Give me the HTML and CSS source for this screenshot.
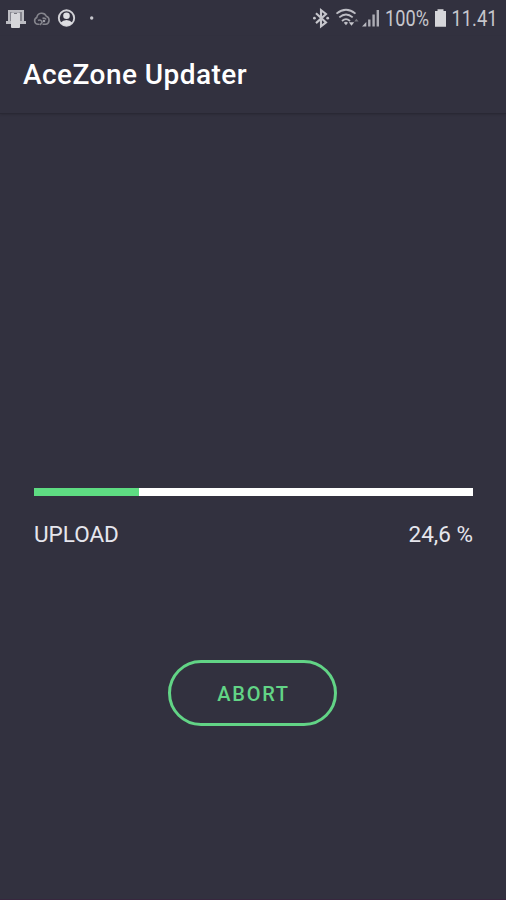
FILE: index.html
```html
<!DOCTYPE html>
<html lang="en">
  <head>
    <meta charset="UTF-8" />
    <meta name="viewport" content="width=device-width, initial-scale=1.0" />
    <title>AceZone Updater</title>
    <link rel="stylesheet" href="styles.css">
  </head>
  <body>
    <div class="status-bar">
      <svg class="status-left" width="100" height="36" viewBox="0 0 100 36">
        <!-- Device -->
        <path d="M8 10H24V21H26V24H6V21H8Z" fill="#bcbcc2" />
        <path d="M10 12H22V21H10Z" fill="#85858e" />
        <rect x="11" y="12.5" width="9" height="15.5" rx="1" fill="#d6d6da" />
        <path d="M14 13.5H17" stroke="#77777f" />
        <!-- Cloud -->
        <g fill="none" stroke="#85858d" stroke-width="1.6">
          <path d="M39.5 24.3H38A3.6 3.6 0 0 1 36.8 17.4A5 5 0 0 1 46.3 16.2A4.2 4.2 0 0 1 45.5 24.3H42.5" />
          <path d="M38 20.5A2.5 2.5 0 0 1 42 22.5L40 25M46 19.5A2.5 2.5 0 0 0 42.5 18.5" />
        </g>
        <circle cx="44" cy="21" r="1.3" fill="#9c9ca4" />
        <!-- Account -->
        <circle cx="66.5" cy="18" r="7.7" fill="none" stroke="#d2d2d7" stroke-width="1.9" />
        <circle cx="66.5" cy="15.7" r="3.3" fill="#dedee2" />
        <path d="M60.6 22.8Q63 20 66.5 20T72.4 22.8Q70 25.7 66.5 25.7T60.6 22.8Z" fill="#dedee2" />
        <circle cx="91.7" cy="18" r="1.7" fill="#c6c6cc" />
      </svg>

      <svg class="status-right" width="206" height="36" viewBox="300 0 206 36">
        <!-- Bluetooth -->
        <path d="M316 13.3L326 22.4L321 26.3V10.2L326 14L316 23.1" fill="none" stroke="#c6c6cc" stroke-width="2.1" />
        <circle cx="314.4" cy="18.2" r="1.4" fill="#c6c6cc" />
        <circle cx="327.7" cy="18.2" r="1.4" fill="#c6c6cc" />
        <!-- Wi-Fi -->
        <g fill="none" stroke="#bdbdc4" stroke-width="1.8">
          <path d="M336.5 13.6Q346 5.8 355.5 13.6" />
          <path d="M339.3 17.4Q346 11.6 352.7 17.4" />
          <path d="M342 21Q346 17.2 350 21" />
        </g>
        <path d="M343.8 22.8Q346 20.8 348 22.8L346 25.3Z" fill="#bdbdc4" />
        <path d="M348.8 22.3H354.2L351.5 25.8Z" fill="#c6c6cc" />
        <path d="M354.2 21.5L356.4 18.7L358.6 21.5Z" fill="#75757e" />
        <!-- Signal -->
        <path d="M362 26.5L366.3 22V26.5Z" fill="#b9b9c0" />
        <path d="M369.3 26.5V19.5M373.6 26.5V14.5M377.8 26.5V10" stroke="#adadb5" stroke-width="2.4" />
        <text x="385" y="26.2" textLength="44" lengthAdjust="spacingAndGlyphs">100%</text>
        <!-- Battery -->
        <path d="M437.5 9.3H443.5V11H446V26.7H435V11H437.5Z" fill="#d6d6da" />
        <text x="451.5" y="26.2" textLength="46" lengthAdjust="spacingAndGlyphs">11.41</text>
      </svg>
    </div>

    <div class="navbar">
      <h1>AceZone Updater</h1>
    </div>

    <div class="container">
      <div class="progress">
        <div class="progress-fill" style="width: 24%"></div>
      </div>
      <div class="progress-info">
        <span>UPLOAD</span>
        <span>24,6 %</span>
      </div>
      <button class="abort-button" type="button">ABORT</button>
    </div>
  </body>
</html>
```

FILE: styles.css
```css
* {
  box-sizing: border-box;
}

body {
  font-family: "Roboto", sans-serif;
  margin: 0;
  height: 900px;
  background-color: #32313f;
  color: white;
  border-bottom: 1px solid #38263e;
  overflow: hidden;
}

.status-bar {
  display: flex;
  justify-content: space-between;
  height: 36px;
}

.status-bar text {
  font-size: 21.5px;
  fill: #c6c6cc;
}

.navbar {
  display: flex;
  align-items: center;
  height: 78px;
  padding: 1px 23px 0;
  border-bottom: 1px solid #292834;
  box-shadow: 0 1px 2px rgba(0, 0, 0, 0.12);
}

.navbar h1 {
  margin: 0;
  font-size: 28px;
  font-weight: 500;
  line-height: 32px;
  letter-spacing: 0.45px;
}

.container {
  display: flex;
  flex-direction: column;
  padding: 374px 33px 0 34px;
}

.progress {
  height: 8px;
  background-color: #ffffff;
}

.progress-fill {
  height: 100%;
  background-color: #5edc82;
}

.progress-info {
  display: flex;
  justify-content: space-between;
  margin-top: 24px;
  color: #e6e6ed;
  font-size: 22.5px;
  line-height: 28px;
}

.abort-button {
  align-self: center;
  width: 169px;
  height: 66px;
  margin-top: 112px;
  margin-right: 2px;
  padding: 2px 0 0;
  border: 3px solid #62d486;
  border-radius: 33px;
  background: transparent;
  color: #62d486;
  font-family: inherit;
  font-size: 20px;
  font-weight: 500;
  letter-spacing: 1.7px;
  text-indent: 2px;
}
```
